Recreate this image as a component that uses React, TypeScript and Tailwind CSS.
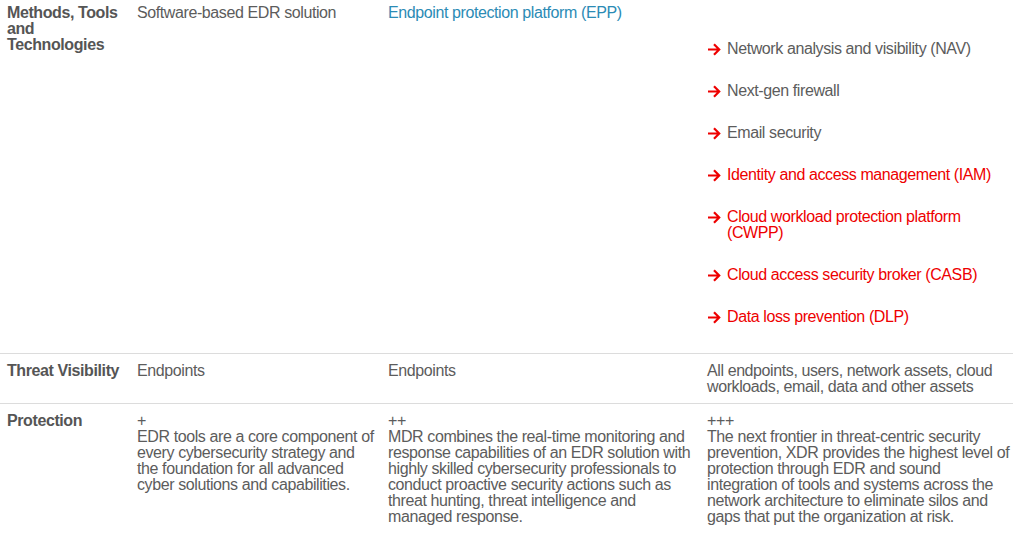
const tools = [
  { label: 'Network analysis and visibility (NAV)', red: false },
  { label: 'Next-gen firewall', red: false },
  { label: 'Email security', red: false },
  { label: 'Identity and access management (IAM)', red: true },
  { label: 'Cloud workload protection platform (CWPP)', red: true },
  { label: 'Cloud access security broker (CASB)', red: true },
  { label: 'Data loss prevention (DLP)', red: true },
]

function Arrow() {
  return (
    <svg width="14" height="13" viewBox="0 0 14 13" fill="none" className="shrink-0 mt-[2px]">
      <path d="M1 6.5h11.5M7 1.3l5.2 5.2L7 11.7" stroke="#ee0000" strokeWidth="2.2" />
    </svg>
  )
}

function Row({ label, cells, className }: { label: string; cells: React.ReactNode[]; className: string }) {
  return (
    <div className={`grid grid-cols-[137px_251px_319px_1fr] ${className}`}>
      <div className="pl-[7px] pr-[12px] font-bold text-[#555555]">{label}</div>
      {cells.map((c, i) => (
        <div key={i} className={i < 2 ? 'pr-4' : ''}>
          {c}
        </div>
      ))}
    </div>
  )
}

export default function App() {
  return (
    <div
      className="w-[1013px] bg-white text-[16px] leading-[16px] tracking-[-0.4px] text-[#5c5c5c] h-[540px] overflow-hidden"
      style={{ fontFamily: '"Liberation Sans", Arial, sans-serif' }}
    >
      <Row
        className="pt-[5px] pb-[28px] border-b border-[#dcdcdc]"
        label="Methods, Tools and Technologies"
        cells={[
          <span>Software-based EDR solution</span>,
          <span className="text-[#2b8bb5]">Endpoint protection platform (EPP)</span>,
          <ul className="pt-[36px] flex flex-col gap-[26px]">
            {tools.map((t) => (
              <li key={t.label} className="flex gap-[6px]">
                <Arrow />
                <span className={t.red ? 'text-[#ee0000]' : ''}>{t.label}</span>
              </li>
            ))}
          </ul>,
        ]}
      />
      <Row
        className="pt-[9px] pb-[8px] border-b border-[#dcdcdc]"
        label="Threat Visibility"
        cells={[
          <span>Endpoints</span>,
          <span>Endpoints</span>,
          <span>All endpoints, users, network assets, cloud workloads, email, data and other assets</span>,
        ]}
      />
      <Row
        className="pt-[9px]"
        label="Protection"
        cells={[
          <p className="whitespace-nowrap">
            +<br />
            EDR tools are a core component of
            <br />
            every cybersecurity strategy and
            <br />
            the foundation for all advanced
            <br />
            cyber solutions and capabilities.
          </p>,
          <p>
            ++<br />
            MDR combines the real-time monitoring and response capabilities of an EDR solution with highly skilled
            cybersecurity professionals to conduct proactive security actions such as threat hunting, threat
            intelligence and managed response.
          </p>,
          <p>
            +++<br />
            The next frontier in threat-centric security prevention, XDR provides the highest level of protection
            through EDR and sound integration of tools and systems across the network architecture to eliminate silos
            and gaps that put the organization at risk.
          </p>,
        ]}
      />
    </div>
  )
}
